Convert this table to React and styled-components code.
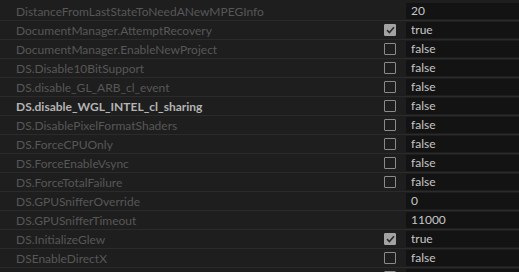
import React from 'react';
import styled, { createGlobalStyle } from 'styled-components';

const GlobalStyle = createGlobalStyle`
  html, body {
    margin: 0;
    padding: 0;
    background: #1e1e1e;
    overflow: hidden;
  }
`;

const Table = styled.div`
  width: 519px;
  height: 272px;
  padding-top: 2px;
  box-sizing: border-box;
  background: #1e1e1e;
  font-family: Lato, 'Open Sans', sans-serif;
  font-size: 12px;
  overflow: hidden;
`;

const Row = styled.div`
  display: grid;
  grid-template-columns: 1fr 12px 113px;
  column-gap: 10px;
  height: 18px;
  border-bottom: 1px solid #2b2b2b;
  align-items: center;
`;

const Label = styled.div`
  padding-left: 16px;
  color: ${p => (p.$active ? '#b4b4b4' : '#575757')};
  font-weight: ${p => (p.$active ? 700 : 400)};
  white-space: nowrap;
  overflow: hidden;
`;

const Box = styled.div`
  width: 12px;
  height: 12px;
  box-sizing: border-box;
  border-radius: 1px;
  border: 1.5px solid ${p => (p.$checked ? '#a3a3a3' : '#8a8a8a')};
  background: ${p => (p.$checked ? '#a3a3a3' : 'transparent')};
  display: flex;
  align-items: center;
  justify-content: center;
`;

const Value = styled.div`
  align-self: start;
  margin-top: 1px;
  height: 16px;
  line-height: 16px;
  background: #131313;
  color: #c6c6c6;
  padding-left: 5px;
  white-space: nowrap;
`;

const rows = [
  { name: 'DistanceFromLastStateToNeedANewMPEGInfo', value: '20' },
  { name: 'DocumentManager.AttemptRecovery', bool: true },
  { name: 'DocumentManager.EnableNewProject', bool: false },
  { name: 'DS.Disable10BitSupport', bool: false },
  { name: 'DS.disable_GL_ARB_cl_event', bool: false },
  { name: 'DS.disable_WGL_INTEL_cl_sharing', bool: false, active: true },
  { name: 'DS.DisablePixelFormatShaders', bool: false },
  { name: 'DS.ForceCPUOnly', bool: false },
  { name: 'DS.ForceEnableVsync', bool: false },
  { name: 'DS.ForceTotalFailure', bool: false },
  { name: 'DS.GPUSnifferOverride', value: '0' },
  { name: 'DS.GPUSnifferTimeout', value: '11000' },
  { name: 'DS.InitializeGlew', bool: true },
  { name: 'DSEnableDirectX', bool: false },
  { name: '', bool: false, value: '' },
];

const Check = () => (
  <svg width="9" height="8" viewBox="0 0 9 8">
    <path d="M1 4.2 L3.4 6.5 L8 1.2" fill="none" stroke="#2b2b2b" strokeWidth="1.6" />
  </svg>
);

export default function App() {
  return (
    <Table>
      <GlobalStyle />
      {rows.map((r, i) => {
        const isBool = typeof r.bool === 'boolean';
        return (
          <Row key={i}>
            <Label $active={r.active}>{r.name}</Label>
            {isBool ? <Box $checked={r.bool}>{r.bool && <Check />}</Box> : <span />}
            <Value>{isBool && r.name ? String(r.bool) : r.value}</Value>
          </Row>
        );
      })}
    </Table>
  );
}
